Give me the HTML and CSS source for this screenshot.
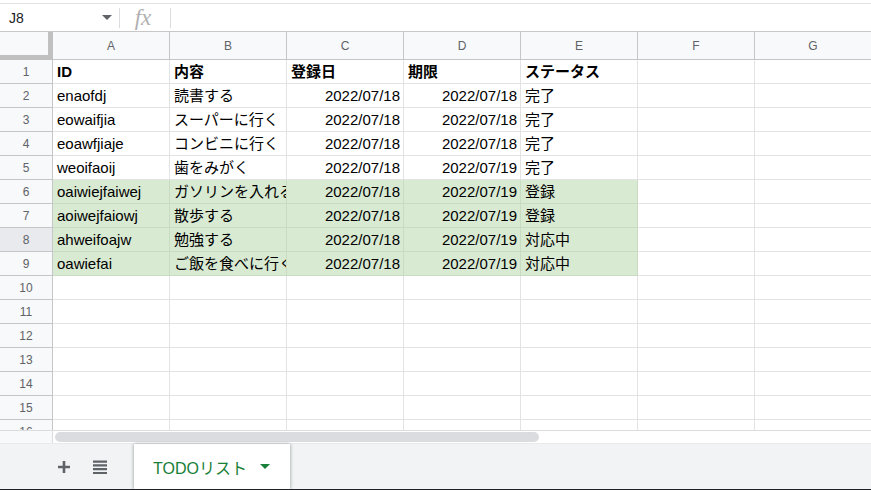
FILE: index.html
```html
<!DOCTYPE html>
<html lang="ja">
<head>
<meta charset="utf-8">
<title>TODOリスト</title>
<link rel="stylesheet" href="styles.css">
</head>
<body>
<div class="app">
  <div class="fbar">
    <div class="namebox">
      <span class="ref">J8</span>
      <span class="nb-arrow"></span>
    </div>
    <div class="fsep"></div>
    <div class="fx">fx</div>
    <div class="fsep"></div>
    <div class="finput"></div>
  </div>

  <div class="sheet">
    <div class="grid">
      <div class="corner"></div>
      <div class="ch">A</div><div class="ch">B</div><div class="ch">C</div><div class="ch">D</div><div class="ch">E</div><div class="ch">F</div><div class="ch">G</div>

      <div class="rh">1</div>
      <div class="c b">ID</div><div class="c b">内容</div><div class="c b">登録日</div><div class="c b">期限</div><div class="c b">ステータス</div><div class="c"></div><div class="c"></div>

      <div class="rh">2</div>
      <div class="c">enaofdj</div><div class="c">読書する</div><div class="c r">2022/07/18</div><div class="c r">2022/07/18</div><div class="c">完了</div><div class="c"></div><div class="c"></div>

      <div class="rh">3</div>
      <div class="c">eowaifjia</div><div class="c">スーパーに行く</div><div class="c r">2022/07/18</div><div class="c r">2022/07/18</div><div class="c">完了</div><div class="c"></div><div class="c"></div>

      <div class="rh">4</div>
      <div class="c">eoawfjiaje</div><div class="c">コンビニに行く</div><div class="c r">2022/07/18</div><div class="c r">2022/07/18</div><div class="c">完了</div><div class="c"></div><div class="c"></div>

      <div class="rh">5</div>
      <div class="c">weoifaoij</div><div class="c">歯をみがく</div><div class="c r">2022/07/18</div><div class="c r">2022/07/19</div><div class="c">完了</div><div class="c"></div><div class="c"></div>

      <div class="rh">6</div>
      <div class="c g">oaiwiejfaiwej</div><div class="c g">ガソリンを入れる</div><div class="c g r">2022/07/18</div><div class="c g r">2022/07/19</div><div class="c g">登録</div><div class="c"></div><div class="c"></div>

      <div class="rh">7</div>
      <div class="c g">aoiwejfaiowj</div><div class="c g">散歩する</div><div class="c g r">2022/07/18</div><div class="c g r">2022/07/19</div><div class="c g">登録</div><div class="c"></div><div class="c"></div>

      <div class="rh sel">8</div>
      <div class="c g">ahweifoajw</div><div class="c g">勉強する</div><div class="c g r">2022/07/18</div><div class="c g r">2022/07/19</div><div class="c g">対応中</div><div class="c"></div><div class="c"></div>

      <div class="rh">9</div>
      <div class="c g">oawiefai</div><div class="c g">ご飯を食べに行く</div><div class="c g r">2022/07/18</div><div class="c g r">2022/07/19</div><div class="c g">対応中</div><div class="c"></div><div class="c"></div>

      <div class="rh">10</div><div class="c"></div><div class="c"></div><div class="c"></div><div class="c"></div><div class="c"></div><div class="c"></div><div class="c"></div>
      <div class="rh">11</div><div class="c"></div><div class="c"></div><div class="c"></div><div class="c"></div><div class="c"></div><div class="c"></div><div class="c"></div>
      <div class="rh">12</div><div class="c"></div><div class="c"></div><div class="c"></div><div class="c"></div><div class="c"></div><div class="c"></div><div class="c"></div>
      <div class="rh">13</div><div class="c"></div><div class="c"></div><div class="c"></div><div class="c"></div><div class="c"></div><div class="c"></div><div class="c"></div>
      <div class="rh">14</div><div class="c"></div><div class="c"></div><div class="c"></div><div class="c"></div><div class="c"></div><div class="c"></div><div class="c"></div>
      <div class="rh">15</div><div class="c"></div><div class="c"></div><div class="c"></div><div class="c"></div><div class="c"></div><div class="c"></div><div class="c"></div>
      <div class="rh">16</div><div class="c"></div><div class="c"></div><div class="c"></div><div class="c"></div><div class="c"></div><div class="c"></div><div class="c"></div>
    </div>
  </div>

  <div class="hscroll">
    <div class="hs-left"></div>
    <div class="hs-track"><div class="thumb"></div></div>
  </div>

  <div class="tabbar">
    <div class="tb-btns">
      <svg class="ico" width="14" height="14" viewBox="0 0 14 14"><path d="M7 1v12M1 7h12" stroke="#5f6368" stroke-width="2.6" fill="none"/></svg>
      <svg class="ico" width="16" height="14" viewBox="0 0 16 14"><path d="M1 1.6h14M1 5.4h14M1 9.2h14M1 13h14" stroke="#5f6368" stroke-width="2.2" fill="none"/></svg>
    </div>
    <div class="tab">
      <span class="tab-name">TODOリスト</span>
      <span class="tab-arrow"></span>
    </div>
  </div>
</div>
</body>
</html>
```

FILE: styles.css
```css
* { box-sizing: border-box; }
html, body { margin: 0; padding: 0; }
body {
  width: 871px;
  height: 490px;
  overflow: hidden;
  background: #fff;
  font-family: "Liberation Sans", Arial, "Noto Sans CJK JP", sans-serif;
}
.app {
  width: 871px;
  height: 490px;
  display: flex;
  flex-direction: column;
  border-bottom: 1px solid #202124;
  overflow: hidden;
}

/* formula bar */
.fbar {
  margin-top: 3px;
  height: 29px;
  flex: none;
  border-top: 1px solid #e3e3e3;
  border-bottom: 1px solid #c7c7c7;
  display: flex;
  align-items: center;
}
.namebox {
  width: 119px;
  display: flex;
  align-items: center;
  justify-content: space-between;
  padding: 0 7px 0 9px;
}
.ref { font-size: 14px; color: #202124; }
.nb-arrow {
  width: 0; height: 0;
  border-left: 5px solid transparent;
  border-right: 5px solid transparent;
  border-top: 5px solid #5f6368;
}
.fsep { width: 1px; height: 20px; background: #dadce0; flex: none; }
.fx {
  width: 50px;
  text-align: center;
  font-family: "Liberation Serif", "DejaVu Serif", serif;
  font-style: italic;
  font-size: 23px;
  color: #b0b0b0;
  line-height: 24px;
  padding-right: 4px;
}
.finput { flex: 1; }

/* sheet grid */
.sheet {
  height: 398px;
  flex: none;
  overflow: hidden;
}
.grid {
  display: grid;
  grid-template-columns: 53px repeat(7, 117px);
  grid-template-rows: 28px;
  grid-auto-rows: 24px;
  width: 872px;
}
.corner {
  background: #f8f9fa;
  border-right: 5px solid #c0c0c0;
  border-bottom: 5px solid #c0c0c0;
}
.ch {
  background: #f8f9fa;
  border-right: 1px solid #c4c7c5;
  border-bottom: 1px solid #c4c7c5;
  display: flex;
  align-items: center;
  justify-content: center;
  font-size: 12px;
  color: #5f6368;
  padding-top: 1px;
}
.rh {
  background: #f8f9fa;
  border-right: 1px solid #c4c7c5;
  border-bottom: 1px solid #c4c7c5;
  display: flex;
  align-items: center;
  justify-content: center;
  font-size: 12px;
  color: #5f6368;
}
.rh.sel { background: #e8eaed; }
.c {
  border-right: 1px solid #e2e3e3;
  border-bottom: 1px solid #e2e3e3;
  font-size: 15px;
  line-height: 23px;
  color: #000;
  padding: 0 3px 0 4px;
  white-space: nowrap;
  overflow: hidden;
  font-family: "Liberation Sans", Arial, "Noto Sans CJK JP", sans-serif;
}
.c.b { font-weight: bold; }
.c.r { text-align: right; }
.c.g {
  background: #d9ead3;
  border-right-color: #c9dbc3;
  border-bottom-color: #c9dbc3;
}

/* horizontal scroll strip */
.hscroll {
  height: 13px;
  flex: none;
  display: flex;
  border-top: 1px solid #dadce0;
}
.hs-left {
  width: 53px;
  background: #f8f9fa;
  border-right: 1px solid #dadce0;
}
.hs-track {
  flex: 1;
  padding: 1px 0 0 2px;
}
.thumb {
  width: 484px;
  height: 10px;
  background: #dadce0;
  border-radius: 5px;
}

/* tab bar */
.tabbar {
  flex: 1;
  background: #f1f3f4;
  border-top: 1px solid #e8eaed;
  display: flex;
}
.tb-btns {
  width: 134px;
  display: flex;
  align-items: center;
  padding-left: 57px;
  gap: 21px;
}
.ico { display: block; }
.tab {
  width: 156px;
  background: #fff;
  box-shadow: 1px 0 3px rgba(60,64,67,0.25), -1px 0 3px rgba(60,64,67,0.25);
  display: flex;
  align-items: center;
  padding-left: 19px;
}
.tab-name {
  font-family: "Liberation Sans", Arial, "Noto Sans CJK JP", sans-serif;
  font-size: 16px;
  color: #188038;
}
.tab-arrow {
  margin-left: 13px;
  width: 0; height: 0;
  border-left: 5px solid transparent;
  border-right: 5px solid transparent;
  border-top: 5px solid #188038;
}
```
